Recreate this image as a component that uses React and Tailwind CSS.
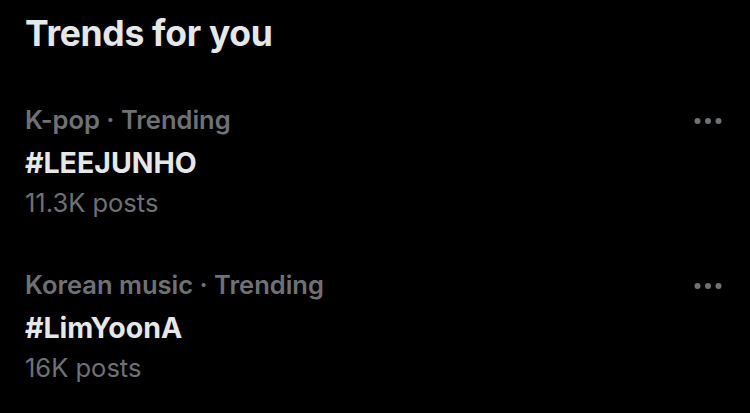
import React from "react";

const trends = [
  { category: "K-pop · Trending", tag: "#LEEJUNHO", posts: "11.3K posts" },
  { category: "Korean music · Trending", tag: "#LimYoonA", posts: "16K posts" },
];

function MoreDots() {
  return (
    <svg width="28" height="8" viewBox="0 0 28 8" className="text-[#6e7175]">
      <circle cx="3.5" cy="4" r="3" fill="currentColor" />
      <circle cx="14" cy="4" r="3" fill="currentColor" />
      <circle cx="24.5" cy="4" r="3" fill="currentColor" />
    </svg>
  );
}

function TrendItem({ category, tag, posts }) {
  return (
    <div className="flex items-start justify-between">
      <div className="flex flex-col">
        <div className="text-[25.5px] leading-[32px] font-semibold text-[#6e7175]">{category}</div>
        <div className="mt-[7px] text-[28.5px] leading-[40px] font-bold text-[#e6e7e8]">{tag}</div>
        <div className="mt-[3px] text-[25.5px] leading-[34px] text-[#6e7175]">{posts}</div>
      </div>
      <div className="pt-[13px]">
        <MoreDots />
      </div>
    </div>
  );
}

export default function App() {
  return (
    <div
      className="w-[750px] h-[413px] bg-black overflow-hidden pl-[25px] pr-[28px] pt-[14px]"
      style={{ fontFamily: "Inter, 'Noto Sans', sans-serif" }}
    >
      <h2 className="text-[35.5px] leading-[40px] font-bold tracking-[-0.3px] text-[#e6e7e8]">Trends for you</h2>
      <div className="mt-[50px] flex flex-col gap-[49px]">
        {trends.map((t) => (
          <TrendItem key={t.tag} {...t} />
        ))}
      </div>
    </div>
  );
}
